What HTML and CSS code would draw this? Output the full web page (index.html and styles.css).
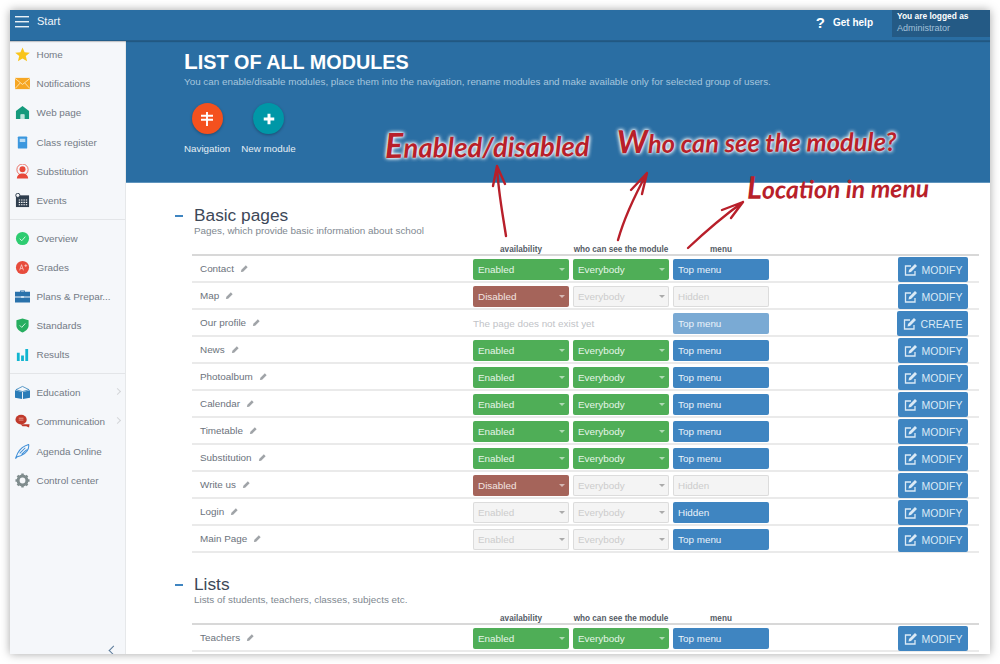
FILE: index.html
```html
<!DOCTYPE html>
<html lang="en">
<head>
<meta charset="utf-8">
<title>List of all modules</title>
<link rel="stylesheet" href="styles.css">
</head>
<body>
<div class="window">
  <header class="topbar">
    <div class="brand">
      <span class="burger"><i></i><i></i><i></i></span>
      <span>Start</span>
    </div>
    <div class="help"><span class="q">?</span><span>Get help</span></div>
    <div class="user"><b>You are logged as</b><span>Administrator</span></div>
  </header>
  <div class="body">
    <nav class="side">
      <div class="group">
        <a class="item"><svg viewBox="0 0 16 16"><polygon fill="#f9c51b" points="8,0.5 10.2,5.7 15.8,6.1 11.5,9.7 12.9,15.2 8,12.2 3.1,15.2 4.5,9.7 0.2,6.1 5.8,5.7"/></svg><span>Home</span></a>
        <a class="item"><svg viewBox="0 0 16 16"><rect y="2" width="16" height="12" fill="#f6a623"/><path d="M0 2.5 8 9l8-6.5M0 13.5 5.5 7.5M16 13.5 10.5 7.5" fill="none" stroke="#fde3b0" stroke-width="1"/></svg><span>Notifications</span></a>
        <a class="item"><svg viewBox="0 0 16 16"><path fill="#159a7c" d="M8 1 15 6.5V15H10V10H6V15H1V6.5Z"/><rect x="6" y="10" width="4" height="5" fill="#bfe6dc"/></svg><span>Web page</span></a>
        <a class="item"><svg viewBox="0 0 16 16"><rect x="3" y="1.5" width="10" height="13" rx="1" fill="#3b97de"/><rect x="5" y="4" width="6" height="3.5" fill="#b9dcf5"/></svg><span>Class register</span></a>
        <a class="item"><svg viewBox="0 0 16 16"><circle cx="8" cy="6" r="6" fill="none" stroke="#e8493a" stroke-width="0.8"/><circle cx="8" cy="5.5" r="3.2" fill="#e8493a"/><path fill="#e8493a" d="M2 15.5c0-3.4 2.600-5 4.500-5.500h3c1.900.5 4.500 2.100 4.500 5.500Z"/></svg><span>Substitution</span></a>
        <a class="item"><svg viewBox="0 0 16 16"><rect x="1" y="2.500" width="14" height="12.500" fill="#2f3e4e"/><path stroke="#fff" stroke-width="1.200" stroke-dasharray="1.500 1" d="M4 7.500h9M4 10h9M4 12.500h9"/><circle cx="3" cy="2.500" r="2.200" fill="#f5f7fa" stroke="#2f3e4e"/></svg><span>Events</span></a>
      </div>
      <div class="group">
        <a class="item"><svg viewBox="0 0 16 16"><circle cx="8" cy="8" r="7" fill="#2ecc71"/><path d="M5 8.200 7.200 10.400 11 6" fill="none" stroke="#d9f7e5" stroke-width="1"/></svg><span>Overview</span></a>
        <a class="item"><svg viewBox="0 0 16 16"><circle cx="8" cy="8" r="7" fill="#e74c3c"/><path d="M5 11 7 5l2 6M5.800 9h2.400M10 6h3M11.500 4.500v3" fill="none" stroke="#fbd5d0" stroke-width="0.800"/></svg><span>Grades</span></a>
        <a class="item"><svg viewBox="0 0 16 16"><path fill="#2a72ab" d="M5.500 3V1.500h5V3H16v5H0V3ZM6.500 3h3V2.500h-3ZM0 9h16v5.500H0Z"/><rect x="6.500" y="7.500" width="3" height="2" fill="#cfe3f2"/></svg><span>Plans &amp; Prepar...</span></a>
        <a class="item"><svg viewBox="0 0 16 16"><path fill="#27ae60" d="M8 0.500 14.500 2.500V8c0 3.500-3 6-6.500 7.500C4.500 14 1.500 11.500 1.500 8V2.500Z"/><path d="M5 7.800 7.200 10 11 5.800" fill="none" stroke="#d9f7e5" stroke-width="1"/></svg><span>Standards</span></a>
        <a class="item"><svg viewBox="0 0 16 16"><path fill="#11b5d0" d="M2 6h3v9H2ZM6.500 9h3v6h-3ZM11 2h3v13h-3Z"/></svg><span>Results</span></a>
      </div>
      <div class="group last">
        <a class="item"><svg viewBox="0 0 16 16"><path fill="#2a7cb8" d="M0 5.500 7.500 7.500V15L0 13.500ZM16 5.500 8.500 7.500V15L16 13.500Z"/><path d="M1 5 8 1.500 15 5 8 7Z" fill="none" stroke="#2a7cb8" stroke-width="0.800"/></svg><span>Education</span><em class="chev"></em></a>
        <a class="item"><svg viewBox="0 0 16 16"><ellipse cx="6.500" cy="6" rx="6" ry="5.200" fill="#c0392b"/><path fill="#c0392b" d="M6 11h9.500l-.5 3.500-3-1.500H8Z"/><path d="M4 4.500h5M4 6.500h5" stroke="#eeb5ae" stroke-width="0.800"/></svg><span>Communication</span><em class="chev"></em></a>
        <a class="item"><svg viewBox="0 0 16 16"><path d="M0.500 15.500 3 9.500C5.500 5 9.500 2 14.500 0.500 15.500 5 12 10.500 6 12.500L2.500 13.500ZM5 10 11 4M7 11 12.500 6" fill="none" stroke="#3f8fd8" stroke-width="1.100"/></svg><span>Agenda Online</span></a>
        <a class="item"><svg viewBox="0 0 16 16"><circle cx="8" cy="8" r="4.700" fill="none" stroke="#7f8c8d" stroke-width="3.200"/><path stroke="#7f8c8d" stroke-width="2.600" d="M8 0.500v3M8 12.500v3M0.500 8h3M12.500 8h3M2.700 2.700l2.100 2.100M11.200 11.200l2.100 2.100M13.300 2.700l-2.100 2.100M4.800 11.200l-2.100 2.100"/></svg><span>Control center</span></a>
      </div>
      <span class="collapse"></span>
    </nav>
    <main class="main">
      <section class="hero">
        <h1>List of all modules</h1>
        <p>You can enable/disable modules, place them into the navigation, rename modules and make available only for selected group of users.</p>
        <div class="actions">
          <div class="action"><span class="disc orange"><svg viewBox="0 0 16 16" width="16" height="16"><path fill="none" stroke="#fff" stroke-width="1.900" d="M8 1v14M2 4.800h12M2 8.800h12"/></svg></span><span>Navigation</span></div>
          <div class="action"><span class="disc teal"><svg viewBox="0 0 16 16" width="14" height="14"><path fill="none" stroke="#fff" stroke-width="3.400" d="M8 2v12M2 8h12"/></svg></span><span>New module</span></div>
        </div>
      </section>

      <section class="sec">
        <div class="sec-head"><i class="minus"></i><div><h2>Basic pages</h2><p>Pages, which provide basic information about school</p></div></div>
        <div class="cols"><span>availability</span><span>who can see the module</span><span>menu</span></div>
        <div class="row"><span class="name">Contact<svg class="pen" viewBox="0 0 10 10"><path d="M1 9 1.500 6.500 6.500 1.500 8.500 3.500 3.500 8.500Z"/></svg></span><span class="sel green">Enabled</span><span class="sel green">Everybody</span><span class="menu">Top menu</span><span class="btn"><svg class="ed" viewBox="0 0 14 14"><path d="M11 8v4H1.500V3H7" fill="none" stroke="currentColor" stroke-width="1.300"/><path fill="currentColor" d="M4.500 9.500 5 7 11 1 13 3 7 9Z"/></svg>MODIFY</span></div>
        <div class="row"><span class="name">Map<svg class="pen" viewBox="0 0 10 10"><path d="M1 9 1.500 6.500 6.500 1.500 8.500 3.500 3.500 8.500Z"/></svg></span><span class="sel brown">Disabled</span><span class="sel off">Everybody</span><span class="menu off">Hidden</span><span class="btn"><svg class="ed" viewBox="0 0 14 14"><path d="M11 8v4H1.500V3H7" fill="none" stroke="currentColor" stroke-width="1.300"/><path fill="currentColor" d="M4.500 9.500 5 7 11 1 13 3 7 9Z"/></svg>MODIFY</span></div>
        <div class="row"><span class="name">Our profile<svg class="pen" viewBox="0 0 10 10"><path d="M1 9 1.500 6.500 6.500 1.500 8.500 3.500 3.500 8.500Z"/></svg></span><span class="none">The page does not exist yet</span><span class="menu light">Top menu</span><span class="btn wide"><svg class="ed" viewBox="0 0 14 14"><path d="M11 8v4H1.500V3H7" fill="none" stroke="currentColor" stroke-width="1.300"/><path fill="currentColor" d="M4.500 9.500 5 7 11 1 13 3 7 9Z"/></svg>CREATE</span></div>
        <div class="row"><span class="name">News<svg class="pen" viewBox="0 0 10 10"><path d="M1 9 1.500 6.500 6.500 1.500 8.500 3.500 3.500 8.500Z"/></svg></span><span class="sel green">Enabled</span><span class="sel green">Everybody</span><span class="menu">Top menu</span><span class="btn"><svg class="ed" viewBox="0 0 14 14"><path d="M11 8v4H1.500V3H7" fill="none" stroke="currentColor" stroke-width="1.300"/><path fill="currentColor" d="M4.500 9.500 5 7 11 1 13 3 7 9Z"/></svg>MODIFY</span></div>
        <div class="row"><span class="name">Photoalbum<svg class="pen" viewBox="0 0 10 10"><path d="M1 9 1.500 6.500 6.500 1.500 8.500 3.500 3.500 8.500Z"/></svg></span><span class="sel green">Enabled</span><span class="sel green">Everybody</span><span class="menu">Top menu</span><span class="btn"><svg class="ed" viewBox="0 0 14 14"><path d="M11 8v4H1.500V3H7" fill="none" stroke="currentColor" stroke-width="1.300"/><path fill="currentColor" d="M4.500 9.500 5 7 11 1 13 3 7 9Z"/></svg>MODIFY</span></div>
        <div class="row"><span class="name">Calendar<svg class="pen" viewBox="0 0 10 10"><path d="M1 9 1.500 6.500 6.500 1.500 8.500 3.500 3.500 8.500Z"/></svg></span><span class="sel green">Enabled</span><span class="sel green">Everybody</span><span class="menu">Top menu</span><span class="btn"><svg class="ed" viewBox="0 0 14 14"><path d="M11 8v4H1.500V3H7" fill="none" stroke="currentColor" stroke-width="1.300"/><path fill="currentColor" d="M4.500 9.500 5 7 11 1 13 3 7 9Z"/></svg>MODIFY</span></div>
        <div class="row"><span class="name">Timetable<svg class="pen" viewBox="0 0 10 10"><path d="M1 9 1.500 6.500 6.500 1.500 8.500 3.500 3.500 8.500Z"/></svg></span><span class="sel green">Enabled</span><span class="sel green">Everybody</span><span class="menu">Top menu</span><span class="btn"><svg class="ed" viewBox="0 0 14 14"><path d="M11 8v4H1.500V3H7" fill="none" stroke="currentColor" stroke-width="1.300"/><path fill="currentColor" d="M4.500 9.500 5 7 11 1 13 3 7 9Z"/></svg>MODIFY</span></div>
        <div class="row"><span class="name">Substitution<svg class="pen" viewBox="0 0 10 10"><path d="M1 9 1.500 6.500 6.500 1.500 8.500 3.500 3.500 8.500Z"/></svg></span><span class="sel green">Enabled</span><span class="sel green">Everybody</span><span class="menu">Top menu</span><span class="btn"><svg class="ed" viewBox="0 0 14 14"><path d="M11 8v4H1.500V3H7" fill="none" stroke="currentColor" stroke-width="1.300"/><path fill="currentColor" d="M4.500 9.500 5 7 11 1 13 3 7 9Z"/></svg>MODIFY</span></div>
        <div class="row"><span class="name">Write us<svg class="pen" viewBox="0 0 10 10"><path d="M1 9 1.500 6.500 6.500 1.500 8.500 3.500 3.500 8.500Z"/></svg></span><span class="sel brown">Disabled</span><span class="sel off">Everybody</span><span class="menu off">Hidden</span><span class="btn"><svg class="ed" viewBox="0 0 14 14"><path d="M11 8v4H1.500V3H7" fill="none" stroke="currentColor" stroke-width="1.300"/><path fill="currentColor" d="M4.500 9.500 5 7 11 1 13 3 7 9Z"/></svg>MODIFY</span></div>
        <div class="row"><span class="name">Login<svg class="pen" viewBox="0 0 10 10"><path d="M1 9 1.500 6.500 6.500 1.500 8.500 3.500 3.500 8.500Z"/></svg></span><span class="sel off">Enabled</span><span class="sel off">Everybody</span><span class="menu">Hidden</span><span class="btn"><svg class="ed" viewBox="0 0 14 14"><path d="M11 8v4H1.500V3H7" fill="none" stroke="currentColor" stroke-width="1.300"/><path fill="currentColor" d="M4.500 9.500 5 7 11 1 13 3 7 9Z"/></svg>MODIFY</span></div>
        <div class="row"><span class="name">Main Page<svg class="pen" viewBox="0 0 10 10"><path d="M1 9 1.500 6.500 6.500 1.500 8.500 3.500 3.500 8.500Z"/></svg></span><span class="sel off">Enabled</span><span class="sel off">Everybody</span><span class="menu">Top menu</span><span class="btn"><svg class="ed" viewBox="0 0 14 14"><path d="M11 8v4H1.500V3H7" fill="none" stroke="currentColor" stroke-width="1.300"/><path fill="currentColor" d="M4.500 9.500 5 7 11 1 13 3 7 9Z"/></svg>MODIFY</span></div>
      </section>

      <section class="sec">
        <div class="sec-head"><i class="minus"></i><div><h2>Lists</h2><p>Lists of students, teachers, classes, subjects etc.</p></div></div>
        <div class="cols"><span>availability</span><span>who can see the module</span><span>menu</span></div>
        <div class="row"><span class="name">Teachers<svg class="pen" viewBox="0 0 10 10"><path d="M1 9 1.500 6.500 6.500 1.500 8.500 3.500 3.500 8.500Z"/></svg></span><span class="sel green">Enabled</span><span class="sel green">Everybody</span><span class="menu">Top menu</span><span class="btn"><svg class="ed" viewBox="0 0 14 14"><path d="M11 8v4H1.500V3H7" fill="none" stroke="currentColor" stroke-width="1.300"/><path fill="currentColor" d="M4.500 9.500 5 7 11 1 13 3 7 9Z"/></svg>MODIFY</span></div>
      </section>
    </main>
  </div>
  <span class="note n1">Enabled/disabled</span>
  <span class="note n2">Who can see the module?</span>
  <span class="note n3">Location in menu</span>
  <svg class="arrows" viewBox="0 0 980 644" width="980" height="644">
    <g fill="none" stroke="#b81f2a" stroke-width="2.400" stroke-linecap="round" stroke-linejoin="round">
      <path d="M496 226C492 200 488 180 487 156M483 176 487 156 495 174"/>
      <path d="M608 230C615 205 625 185 637 163M621 180 637 163 632 184"/>
      <path d="M678 238C695 222 715 205 733 192M712 200 733 192 721 208"/>
    </g>
  </svg>
</div>
</body>
</html>
```
FILE: styles.css
```css
* { box-sizing: border-box; }
html, body { margin: 0; height: 100%; background: #fff; overflow: hidden; }
body { padding: 10px; font-family: "Liberation Sans", Arial, sans-serif; }
.window {
  position: relative; width: 980px; height: 644px; overflow: hidden;
  background: #fff; display: flex; flex-direction: column;
  box-shadow: 0 0 9px rgba(0,0,0,.35);
}
.topbar { height: 31px; flex: none; display: flex; background: #2a6ea3; color: #fff; border-bottom: 1px solid #245c88; box-shadow: 0 1px 1px rgba(0,0,0,.2); z-index: 2; }
.brand { width: 116px; display: flex; align-items: center; gap: 8px; padding: 0 0 8px 5px; font-size: 11px; height: 30px; color: #f2f6fa; }
.burger { display: flex; flex-direction: column; gap: 4px; width: 14px; }
.burger i { display: block; height: 1px; background: #e8f0f6; box-shadow: 0 0.5px 0 #c7d9e7; }
.help { margin-left: auto; display: flex; align-items: center; gap: 8px; font-size: 10px; font-weight: 700; height: 24px; }
.q { font-size: 15px; font-weight: 700; }
.user { width: 98px; margin-left: 19px; height: 27px; background: #245a85; padding: 0 0 0 5px; display: flex; flex-direction: column; font-size: 9px; line-height: 12px; }
.user b { font-size: 8.400px; }
.user span { color: #a3c1da; }
.body { flex: 1; display: flex; min-height: 0; }
.side { position: relative; width: 116px; flex: none; margin-top: -1px; background: #f5f7fa; border-right: 1px solid #e6e8ea; color: #737a85; }
.group { border-bottom: 1px solid #e3e5e8; padding-bottom: 3.750px; margin-bottom: 3.750px; }
.group.last { border: 0; }
.item { position: relative; display: flex; align-items: center; height: 29.200px; padding-left: 5px; font-size: 9.900px; white-space: nowrap; }
.item svg { width: 15px; height: 15px; margin-right: 6.500px; flex: none; }
.chev { position: absolute; right: 5px; top: 11px; width: 5px; height: 5px; border-top: 1px solid #d4d6d9; border-right: 1px solid #d4d6d9; transform: rotate(45deg); }
.collapse { position: absolute; left: 100px; bottom: 0; width: 7px; height: 7px; border-left: 1.500px solid #5a7a99; border-bottom: 1.500px solid #5a7a99; transform: rotate(45deg); }
.main { flex: 1; min-width: 0; }
.hero { height: 142px; background: #2a6ea3; padding: 9px 0 0 58px; color: #fff; border-bottom: 1px solid #5f94bd; }
.hero h1 { margin: 0 0 1px; font-size: 19.800px; line-height: 24px; font-weight: 700; text-transform: uppercase; }
.hero h1::first-letter { font-size: 22.500px; }
.hero p { margin: 0; font-size: 9.850px; line-height: 14px; color: #a6c6de; }
.actions { display: flex; gap: 11px; margin-top: 14px; font-size: 9.800px; color: #e6eef5; }
.action { display: flex; flex-direction: column; align-items: center; gap: 9px; }
.disc { width: 31px; height: 31px; border-radius: 50%; display: flex; align-items: center; justify-content: center; box-shadow: 0 1px 3px rgba(0,0,0,.3); }
.orange { background: #f4511e; }
.teal { background: #0097a7; }
.sec { padding: 23px 11px 0 66px; }
.sec + .sec { padding-top: 22px; }
.sec-head { position: relative; }
.sec-head h2 { margin: 0; font-size: 17.300px; line-height: 19px; font-weight: 400; color: #3d4858; padding-left: 2px; }
.sec-head p { margin: 0; font-size: 9.900px; line-height: 12px; color: #808890; padding-left: 2px; }
.minus { position: absolute; left: -17px; top: 9px; width: 8px; height: 2px; background: #3f85c1; }
.cols { display: flex; height: 13px; margin-top: 6px; padding-left: 281px; font-size: 8.200px; font-weight: 700; line-height: 13px; color: #555c66; border-bottom: 2px solid #d8d8d8; }
.cols span { width: 100px; text-align: center; padding-right: 4px; white-space: nowrap; }
.row { display: flex; align-items: center; height: 27px; gap: 4px; padding-top: 2px; border-bottom: 2px solid #eaeaea; font-size: 9.900px; }
.name { width: 277px; padding-left: 8px; color: #6b727c; display: flex; align-items: center; gap: 6px; padding-bottom: 3px; }
.pen { width: 9px; height: 9px; fill: #a0a4a8; }
.sel, .menu { position: relative; width: 96px; height: 21px; padding-left: 5px; line-height: 21px; color: #fff; border-radius: 2px; flex: none; }
.sel::after { content: ""; position: absolute; right: 4px; top: 9px; border: 3.500px solid transparent; border-top-color: rgba(255,255,255,.55); border-bottom: 0; }
.green { background: #4fae57; color: #e6f5e8; }
.brown { background: #a5645a; color: #f3e4e1; }
.menu { background: #3f85c1; color: #eaf3fa; }
.menu.light { background: #7aaad4; }
.off { background: #f4f4f4; color: #ccc; box-shadow: inset 0 0 0 1px #dcdcdc; line-height: 21px; }
.menu.off { background: #f4f4f4; color: #ccc; }
.sel.off::after { border-top-color: #aaa; }
.none { width: 196px; color: #bfc3c7; padding-left: 0; }
.btn { margin-left: auto; margin-right: 11px; width: 70px; height: 25px; background: #3f85c1; color: #dbeaf6; border-radius: 2px; display: flex; align-items: center; justify-content: center; gap: 4px; font-size: 10.500px; }
.btn.wide { width: 71px; }
.ed { width: 14px; height: 14px; }
.note { position: absolute; color: #b81f2a; font-family: "Lato", sans-serif; font-style: italic; font-weight: 700; white-space: nowrap; transform: rotate(-.5deg); z-index: 3; }
.note::first-letter { font-size: 1.250em; }
.n1 { left: 375px; top: 113px; font-size: 27.500px; text-shadow: 0 0 4px #fff, 0 0 4px #fff, 0 0 2px #fff; }
.n2 { left: 607px; top: 111px; font-size: 25.500px; text-shadow: 0 0 4px #fff, 0 0 4px #fff, 0 0 2px #fff; }
.n3 { left: 737px; top: 157px; font-size: 24.800px; }
.arrows { position: absolute; left: 0; top: 0; z-index: 3; pointer-events: none; }
```
